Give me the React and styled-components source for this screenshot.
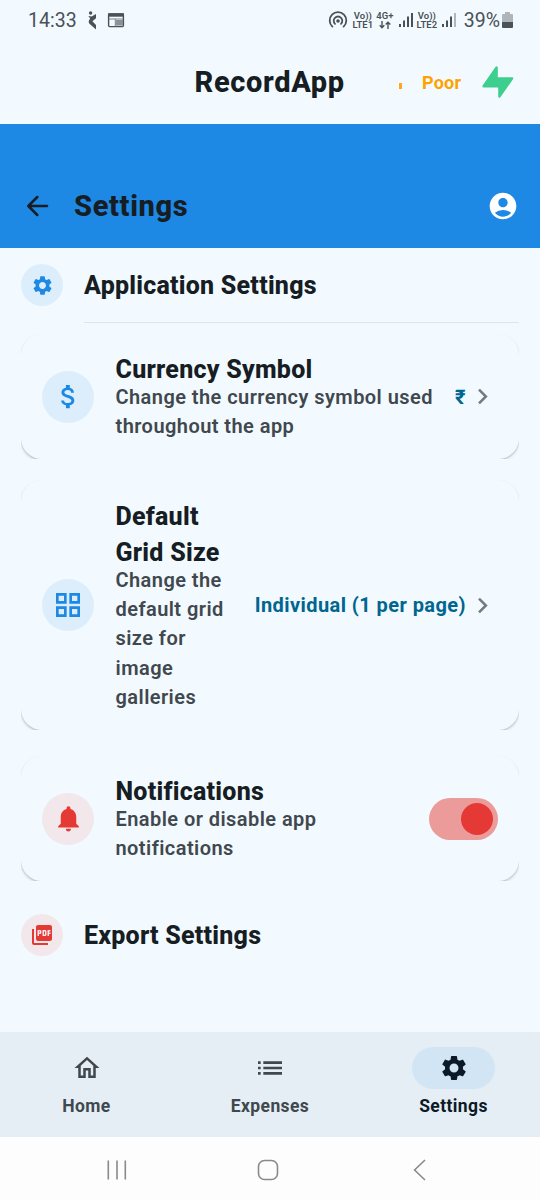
import React from "react";
import styled, { createGlobalStyle } from "styled-components";
import {
  MdSettings, MdAttachMoney, MdGridView, MdNotifications, MdPictureAsPdf,
  MdOutlineHome, MdList, MdAccountCircle, MdChevronRight,
} from "react-icons/md";

const GlobalStyle = createGlobalStyle`
  *, *::before, *::after { box-sizing: border-box; }
  html, body { margin: 0; padding: 0; }
  body { background: #f3faff; font-family: Roboto, "Liberation Sans", sans-serif; color: #161d23; }
  svg { display: block; flex: none; }
`;

const Screen = styled.div`
  width: 540px;
  height: 1200px;
  display: flex;
  flex-direction: column;
  overflow: hidden;
  background: #f3faff;
`;

const StatusBar = styled.div`
  height: 40px;
  flex: none;
  display: flex;
  align-items: center;
  padding: 0 27px 0 28px;
  color: #4a5157;
`;
const Clock = styled.span`
  font-size: 19.5px;
  width: 60px;
  letter-spacing: 0.05px;
  white-space: nowrap;
`;
const NewsIcon = styled.svg`
  margin-left: 10px;
`;
const StatusRight = styled.div`
  margin-left: auto;
  display: flex;
  align-items: center;
`;
const Stack = styled.span`
  display: flex;
  flex-direction: column;
  align-items: center;
  font-size: 9.5px;
  font-weight: 600;
  line-height: 9px;
  white-space: nowrap;
  width: ${(p) => p.$w}px;
  margin: 0 ${(p) => p.$mr || 0}px 0 ${(p) => p.$ml}px;
  svg { margin-top: 0.5px; }
`;
const Battery = styled.span`
  font-size: 19.5px;
  margin: 0 2px 0 7px;
`;

const BrandBar = styled.header`
  height: 84px;
  flex: none;
  display: flex;
  align-items: center;
  padding: 0 26px 0 194.5px;
`;
const Brand = styled.h1`
  margin: 0;
  width: 204.5px;
  font-size: 29px;
  font-weight: 800;
  line-height: 36px;
  white-space: nowrap;
  letter-spacing: 0.65px;
`;
const SignalDot = styled.i`
  width: 3px;
  height: 6px;
  margin: 8px 20px 0 0;
  background: #ffa51f;
`;
const Quality = styled.span`
  width: 60px;
  font-size: 18px;
  font-weight: 700;
  letter-spacing: 0.2px;
  color: #ffa200;
`;

const AppBar = styled.div`
  height: 124px;
  flex: none;
  display: flex;
  align-items: center;
  padding: 40px 21px 0 26px;
  background: #1e88e5;
  color: #161d23;
`;
const PageTitle = styled(Brand).attrs({ as: "h2" })`
  margin-left: 25px;
  margin-right: auto;
  width: auto;
`;

const Content = styled.main`
  flex: 1;
  min-height: 0;
  overflow: hidden;
  padding: 0 21px;
`;
const SectionHead = styled.div`
  display: flex;
  align-items: center;
  height: 74px;
  margin-top: ${(p) => p.$mt || 0}px;
`;
const IconDisc = styled.span`
  width: ${(p) => p.$size}px;
  height: ${(p) => p.$size}px;
  flex: none;
  display: flex;
  align-items: center;
  justify-content: center;
  border-radius: 50%;
  background: ${(p) => (p.$red ? "#f2e7eb" : "#dceefc")};
  color: ${(p) => (p.$red ? "#e53935" : "#1e88e5")};
`;
const SectionTitle = styled.h3`
  margin: 2px 0 0 21px;
  font-size: 25px;
  font-weight: 800;
  line-height: 32px;
  letter-spacing: 0.23px;
  white-space: nowrap;
`;
const Divider = styled.div`
  height: 1px;
  margin-left: 63px;
  background: #dfe5e9;
`;

const CardClip = styled.div`
  height: ${(p) => p.$h}px;
  margin-top: ${(p) => p.$mt}px;
  overflow: hidden;
`;
const Card = styled.section`
  height: 100%;
  display: flex;
  align-items: center;
  padding: 0 21px;
  border-radius: 21px;
  background: #f3faff;
  box-shadow: 0 1px 2px rgba(0, 0, 0, 0.14), 0 2px 3px rgba(0, 0, 0, 0.12);
`;
const CardText = styled.div`
  width: ${(p) => p.$w}px;
  flex: none;
  margin: 1px 0 0 21.5px;
`;
const CardTitle = styled.h4`
  margin: 0;
  font-size: 25px;
  font-weight: 800;
  line-height: 36.5px;
  letter-spacing: 0.25px;
`;
const CardNote = styled.p`
  margin: -6px 0 0;
  font-size: 20px;
  font-weight: 600;
  line-height: 29.3px;
  letter-spacing: 0.44px;
  color: #40484e;
`;
const Trailing = styled.div`
  margin-left: auto;
  display: flex;
  align-items: center;
  color: #757b80;
`;
const Value = styled.span`
  margin-right: 1px;
  font-size: 20px;
  font-weight: 700;
  letter-spacing: 0.43px;
  white-space: nowrap;
  color: #00658f;
`;
const Switch = styled.span`
  width: 69px;
  height: 42px;
  display: flex;
  align-items: center;
  justify-content: flex-end;
  padding-right: 5px;
  border-radius: 21px;
  background: #ec9b9b;
`;
const Knob = styled.i`
  width: 32px;
  height: 32px;
  border-radius: 50%;
  background: #e53935;
`;

const TabBar = styled.nav`
  height: 105px;
  flex: none;
  display: grid;
  grid-template-columns: repeat(3, 183.5px);
  justify-content: center;
  padding-top: 14.5px;
  background: #e6eef5;
`;
const Tab = styled.div`
  display: flex;
  flex-direction: column;
  align-items: center;
  color: ${(p) => (p.$on ? "#0b1a26" : "#40484e")};
`;
const Pill = styled.span`
  width: 83px;
  height: 42px;
  display: flex;
  align-items: center;
  justify-content: center;
  border-radius: 21px;
  background: ${(p) => (p.$on ? "#d2e5f5" : "transparent")};
`;
const TabLabel = styled.span`
  margin-top: 7px;
  font-size: 17.5px;
  font-weight: 700;
  line-height: 21px;
  letter-spacing: 0.4px;
`;

const SystemNav = styled.div`
  height: 63px;
  flex: none;
  display: flex;
  align-items: center;
  padding: 2px 114px 0 106px;
  background: #fdfdfd;
  svg:nth-child(2) { margin-left: 129px; }
  svg:last-child { margin-left: auto; }
`;

function Bars({ last = 1 }) {
  return (
    <svg width="15" height="16" viewBox="0 0 15 16" fill="currentColor">
      <rect x="0" y="12" width="2" height="3" />
      <rect x="4" y="8.5" width="2" height="6.5" />
      <rect x="8" y="4.5" width="2" height="10.5" />
      <rect x="12" y="1" width="2" height="14" opacity={last} />
    </svg>
  );
}

function SettingCard({ h, mt, icon, red, title, note, width, children }) {
  return (
    <CardClip $h={h} $mt={mt}>
      <Card>
        <IconDisc $size={52} $red={red}>{icon}</IconDisc>
        <CardText $w={width}>
          <CardTitle>{title}</CardTitle>
          <CardNote>{note}</CardNote>
        </CardText>
        <Trailing>{children}</Trailing>
      </Card>
    </CardClip>
  );
}

const tabs = [
  { label: "Home", icon: <MdOutlineHome size={30} /> },
  { label: "Expenses", icon: <MdList size={32} /> },
  { label: "Settings", icon: <MdSettings size={30} />, on: true },
];

export default function App() {
  return (
    <Screen>
      <GlobalStyle />
      <StatusBar>
        <Clock>14:33</Clock>
        <svg width="9" height="19" viewBox="0 0 9 19" fill="#4a5157">
          <circle cx="2.6" cy="2" r="1.7" />
          <path d="M0.3 5 L3.6 5.4 L8 3 V7.2 L4.4 10.3 L8 14 V18.5 L1.2 12.4 Q0 10.8 1.2 9 L2.2 7.6 Z" />
        </svg>
        <NewsIcon width="18" height="16" viewBox="0 0 18 16">
          <rect x="1.6" y="2" width="14.8" height="12.6" rx="1" fill="none" stroke="#4a5157" strokeWidth="1.4" />
          <path d="M1 1.3h16v3.4H1z" fill="#4a5157" />
          <path d="M2 7h14M8.3 7v7.4" stroke="#7c8388" strokeWidth="1" fill="none" />
          <path d="M9 8h7v5.6H9z" fill="#8b9297" />
        </NewsIcon>
        <StatusRight>
          <svg width="20" height="18" viewBox="0 0 20 18" fill="none" stroke="currentColor" strokeWidth="1.8" strokeLinecap="round">
            <circle cx="10" cy="10" r="1.8" fill="currentColor" stroke="none" />
            <path d="M7 12.9a4.3 4.3 0 1 1 6 0M4.4 15.6a8.3 8.3 0 1 1 11.2 0" />
          </svg>
          <Stack $w={20} $ml={5}><span>Vo))</span><span>LTE1</span></Stack>
          <Stack $w={16} $ml={4} $mr={6}>
            <span>4G+</span>
            <svg width="12" height="8" viewBox="0 0 12 8" fill="none" stroke="currentColor" strokeWidth="1.4">
              <path d="M3 0v6.5M.7 4.2 3 6.7 5.3 4.2M9 8V1.2M6.7 3.6 9 1.2l2.3 2.4" />
            </svg>
          </Stack>
          <Bars />
          <Stack $w={20} $ml={3} $mr={5}><span>Vo))</span><span>LTE2</span></Stack>
          <Bars last={0.4} />
          <Battery>39%</Battery>
          <svg width="11" height="16" viewBox="0 0 11 16">
            <path d="M3 0h5v2h2a1 1 0 0 1 1 1v7H0V3a1 1 0 0 1 1-1h2z" fill="#b0b5b9" />
            <path d="M0 10h11v5a1 1 0 0 1-1 1H1a1 1 0 0 1-1-1z" fill="#4a5157" />
          </svg>
        </StatusRight>
      </StatusBar>

      <BrandBar>
        <Brand>RecordApp</Brand>
        <SignalDot />
        <Quality>Poor</Quality>
        <svg width="32" height="32" viewBox="0 0 32 32" fill="#3ecf8e" stroke="#3ecf8e" strokeWidth="2.4" strokeLinejoin="round">
          <path d="M14.6 1.5V12.4H30.2L17.4 30.5V20.2H1.6z" />
        </svg>
      </BrandBar>

      <AppBar>
        <svg width="23" height="22" viewBox="0 0 23 22" fill="none" stroke="currentColor" strokeWidth="2.5" strokeLinecap="round" strokeLinejoin="round">
          <path d="M21 11H2.5M11.3 2 2.3 11l9 9" />
        </svg>
        <PageTitle>Settings</PageTitle>
        <MdAccountCircle size={32} color="#ffffff" />
      </AppBar>

      <Content>
        <SectionHead>
          <IconDisc $size={42}><MdSettings size={23} /></IconDisc>
          <SectionTitle>Application Settings</SectionTitle>
        </SectionHead>
        <Divider />

        <SettingCard h={125} mt={11} width={330} icon={<MdAttachMoney size={31} />}
          title="Currency Symbol" note="Change the currency symbol used throughout the app">
          <Value>₹</Value>
          <MdChevronRight size={31} />
        </SettingCard>

        <SettingCard h={250} mt={21} width={118} icon={<MdGridView size={32} />}
          title="Default Grid Size" note="Change the default grid size for image galleries">
          <Value>Individual (1 per page)</Value>
          <MdChevronRight size={31} />
        </SettingCard>

        <SettingCard h={125} mt={26} width={260} red icon={<MdNotifications size={31} />}
          title="Notifications" note="Enable or disable app notifications">
          <Switch><Knob /></Switch>
        </SettingCard>

        <SectionHead $mt={17}>
          <IconDisc $size={42} $red><MdPictureAsPdf size={24} /></IconDisc>
          <SectionTitle>Export Settings</SectionTitle>
        </SectionHead>
      </Content>

      <TabBar>
        {tabs.map((t) => (
          <Tab key={t.label} $on={t.on}>
            <Pill $on={t.on}>{t.icon}</Pill>
            <TabLabel>{t.label}</TabLabel>
          </Tab>
        ))}
      </TabBar>

      <SystemNav>
        <svg width="22" height="22" viewBox="0 0 22 22" stroke="#8a8a8a" strokeWidth="1.6">
          <path d="M2.3 1.5v19M11 1.5v19M19.3 1.5v19" />
        </svg>
        <svg width="22" height="22" viewBox="0 0 22 22" fill="none" stroke="#8a8a8a" strokeWidth="1.6">
          <rect x="1.5" y="1.5" width="19" height="19" rx="6" />
        </svg>
        <svg width="13" height="22" viewBox="0 0 13 22" fill="none" stroke="#8a8a8a" strokeWidth="1.6">
          <path d="M12 1 1.6 11 12 21" />
        </svg>
      </SystemNav>
    </Screen>
  );
}
